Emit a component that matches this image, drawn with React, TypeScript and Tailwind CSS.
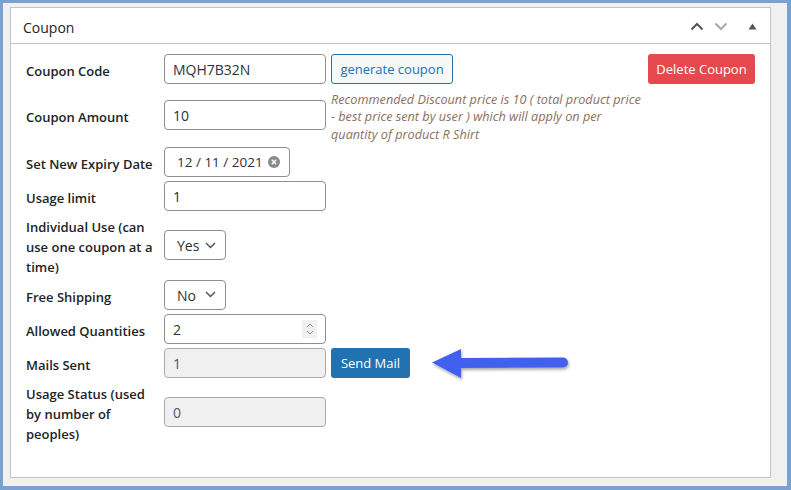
function Chevron({ dir, color }: { dir: "up" | "down"; color: string }) {
  return (
    <svg width="14" height="9" viewBox="0 0 14 9" fill="none">
      <path
        d={dir === "up" ? "M1.5 7.5 L7 2 L12.5 7.5" : "M1.5 1.5 L7 7 L12.5 1.5"}
        stroke={color}
        strokeWidth="2"
      />
    </svg>
  );
}

function Field({ value, width = "w-[162px]", disabled = false, children }: {
  value: string;
  width?: string;
  disabled?: boolean;
  children?: React.ReactNode;
}) {
  return (
    <div
      className={`${width} flex h-[30px] shrink-0 items-center justify-between rounded-[4px] border px-2 text-[14px] ${
        disabled ? "border-[#a7aaad] bg-[#f0f0f1] text-[#50575e]" : "border-[#8c8f94] bg-white text-[#2c3338]"
      }`}
    >
      <span className="pt-[1px]">{value}</span>
      {children}
    </div>
  );
}

function Select({ value }: { value: string }) {
  return (
    <div className="flex h-[30px] w-[62px] shrink-0 items-center justify-between rounded-[4px] border border-[#8c8f94] bg-white pl-3 pr-[9px] text-[14px] text-[#2c3338]">
      <span className="pt-[1px]">{value}</span>
      <svg width="11" height="7" viewBox="0 0 11 7" fill="none">
        <path d="M1 1 L5.5 5.5 L10 1" stroke="#50575e" strokeWidth="1.5" />
      </svg>
    </div>
  );
}

function Label({ children }: { children: React.ReactNode }) {
  return (
    <div className="w-[138px] shrink-0 pt-[4px] text-[13px] font-semibold leading-[20px] text-[#1d2327]">{children}</div>
  );
}

export default function App() {
  return (
    <div className="flex h-[490px] w-[791px] border-b-4 border-l-[3px] border-r-4 border-t-[3px] border-[#78a2d2] bg-[#f0f0f1] pb-[8px] pl-[7px] pr-[16px] pt-[4px] font-['Open_Sans','Noto_Sans',sans-serif]">
      <div className="flex flex-1 flex-col border border-[#c3c4c7] bg-white">
        <div className="flex h-[36px] items-center border-b border-[#c3c4c7] pl-3 pr-[13px]">
          <h2 className="pt-[3px] text-[14px] text-[#1d2327]">Coupon</h2>
          <div className="ml-auto flex items-center pt-[1px]">
            <Chevron dir="up" color="#50575e" />
            <span className="ml-[10px]">
              <Chevron dir="down" color="#a7aaad" />
            </span>
            <svg className="ml-[20px]" width="9" height="7" viewBox="0 0 9 7">
              <path d="M0.5 6.5 L4.5 0.5 L8.5 6.5 Z" fill="#50575e" />
            </svg>
          </div>
        </div>

        <div className="flex flex-col gap-[5px] pl-[15px] pr-[15px] pt-[10px]">
          <div className="flex h-[29px] items-center">
            <Label>Coupon Code</Label>
            <Field value="MQH7B32N" />
            <button className="ml-[5px] h-[30px] w-[122px] rounded-[3px] border border-[#2271b1] bg-[#f6f7f7] pt-[2px] text-[13px] text-[#2271b1]">
              generate coupon
            </button>
            <button className="ml-auto h-[30px] w-[107px] rounded-[3px] bg-[#e5484d] pt-[2px] text-[13px] text-white">
              Delete Coupon
            </button>
          </div>

          <div className="flex h-[54px] items-center">
            <Label>Coupon Amount</Label>
            <Field value="10" />
            <p className="ml-[5px] whitespace-nowrap pt-[4px] text-[12.7px] italic leading-[17.5px] text-[#8c6f5e]">
              Recommended Discount price is 10 ( total product price
              <br />- best price sent by user ) which will apply on per
              <br />quantity of product R Shirt
            </p>
          </div>

          <div className="flex h-[29px] items-center">
            <Label>Set New Expiry Date</Label>
            <div className="flex h-[30px] w-[126px] items-center justify-between rounded-[4px] border border-[#8c8f94] bg-white pl-3 pr-[9px] text-[13.5px] text-[#2c3338]">
              <span className="pt-[1px]">12 / 11 / 2021</span>
              <svg width="12" height="12" viewBox="0 0 12 12">
                <circle cx="6" cy="6" r="6" fill="#8a8a8a" />
                <path d="M3.8 3.8 L8.2 8.2 M8.2 3.8 L3.8 8.2" stroke="#fff" strokeWidth="1.5" />
              </svg>
            </div>
          </div>

          <div className="flex h-[29px] items-center">
            <Label>Usage limit</Label>
            <Field value="1" />
          </div>

          <div className="flex h-[60px] items-center">
            <Label>
              Individual Use (can
              <br />
              use one coupon at a
              <br />
              time)
            </Label>
            <Select value="Yes" />
          </div>

          <div className="flex h-[29px] items-center">
            <Label>Free Shipping</Label>
            <Select value="No" />
          </div>

          <div className="flex h-[29px] items-center">
            <Label>Allowed Quantities</Label>
            <Field value="2">
              <div className="flex h-[18px] w-[15px] flex-col items-center justify-center gap-[2px] bg-[#f0f0f1]">
                <svg width="8" height="5" viewBox="0 0 8 5" fill="none">
                  <path d="M1 4 L4 1 L7 4" stroke="#8c8f94" strokeWidth="1" />
                </svg>
                <svg width="8" height="5" viewBox="0 0 8 5" fill="none">
                  <path d="M1 1 L4 4 L7 1" stroke="#8c8f94" strokeWidth="1" />
                </svg>
              </div>
            </Field>
          </div>

          <div className="flex h-[29px] items-center">
            <Label>Mails Sent</Label>
            <Field value="1" disabled />
            <button className="ml-[5px] h-[30px] w-[79px] rounded-[3px] bg-[#2271b1] pt-[2px] text-[13px] text-white">
              Send Mail
            </button>
            <svg className="ml-[20px]" width="142" height="40" viewBox="0 0 142 40">
              <defs>
                <filter id="sh" x="-10%" y="-40%" width="120%" height="180%">
                  <feDropShadow dx="1" dy="2" stdDeviation="1.5" floodColor="#000" floodOpacity="0.35" />
                </filter>
              </defs>
              <g filter="url(#sh)">
                <path d="M28 15 L133 14.5 A5 5 0 0 1 133 24.5 L28 25 Z" fill="#4361ee" />
                <path d="M2 19.5 L31 6 L31 35 Z" fill="#4361ee" />
              </g>
            </svg>
          </div>

          <div className="flex h-[60px] items-center">
            <Label>
              Usage Status (used
              <br />
              by number of
              <br />
              peoples)
            </Label>
            <Field value="0" disabled />
          </div>
        </div>
      </div>
    </div>
  );
}
